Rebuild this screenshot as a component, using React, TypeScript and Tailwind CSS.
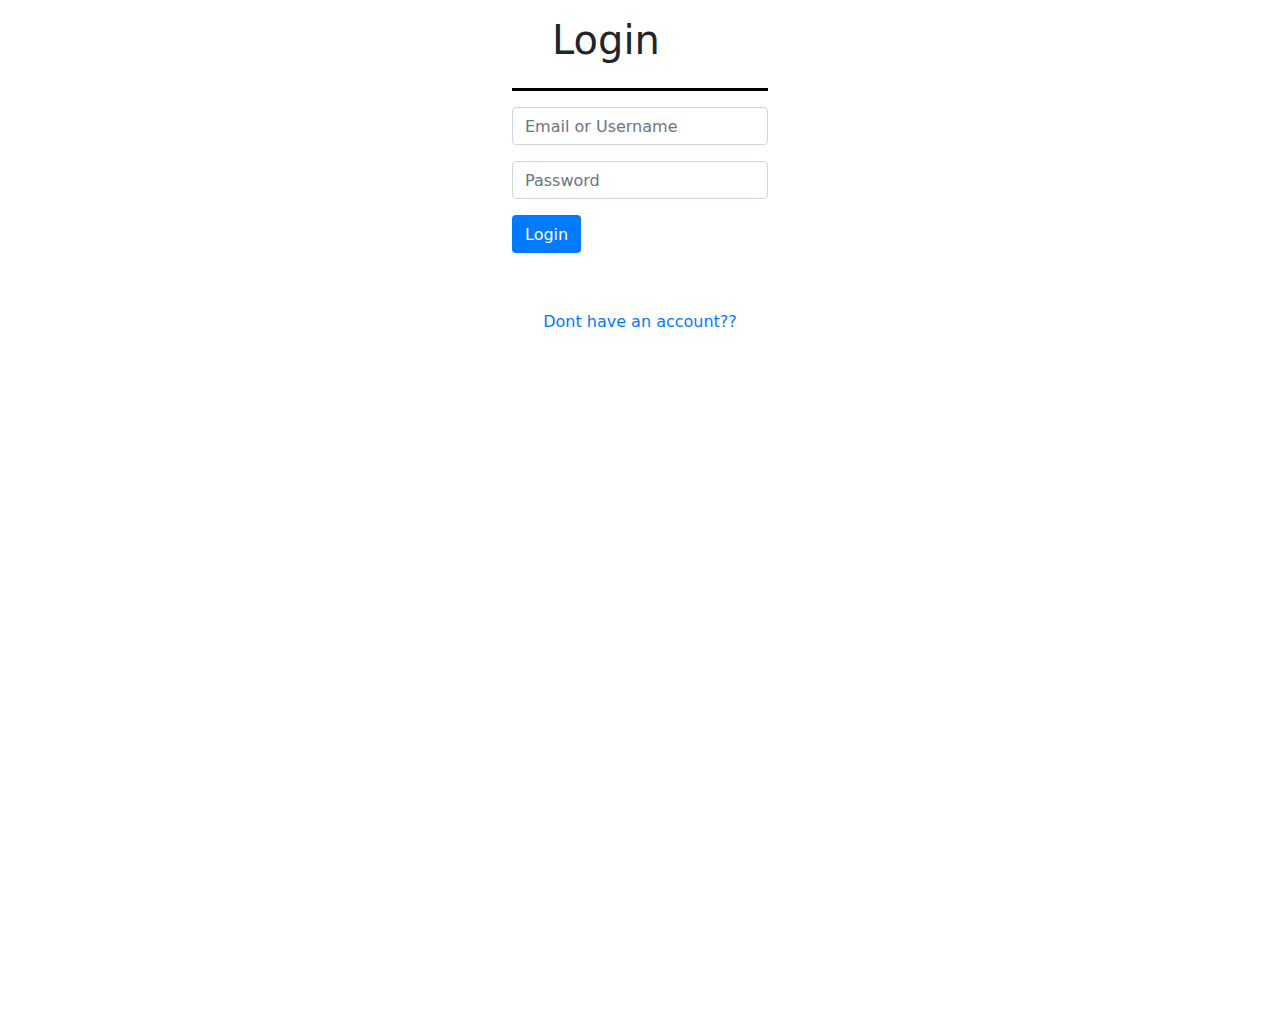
export default function App() {
  const font = { fontFamily: '"DejaVu Sans", sans-serif' };
  return (
    <div className="min-h-screen bg-white text-[#212529]" style={font}>
      <div className="mx-auto w-[256px]">
        <h1 className="mt-4 mb-6 pl-[40px] text-[40px] leading-[48px] font-normal">Login</h1>
        <div className="mb-4 border-t-[3px] border-black" />
        <input
          className="mb-4 block h-[38px] w-full rounded border border-[#ced4da] px-3 text-base text-[#495057] placeholder:text-[#6c757d] outline-none"
          placeholder="Email or Username"
        />
        <input
          type="password"
          className="mb-4 block h-[38px] w-full rounded border border-[#ced4da] px-3 text-base text-[#495057] placeholder:text-[#6c757d] outline-none"
          placeholder="Password"
        />
        <button className="block h-[38px] rounded bg-[#007bff] px-[13px] pt-[2px] text-base leading-6 text-white">Login</button>
        <div className="mt-[57px] text-center">
          <a href="#" className="text-base leading-6 text-[#007bff]">Dont have an account??</a>
        </div>
      </div>
    </div>
  );
}
